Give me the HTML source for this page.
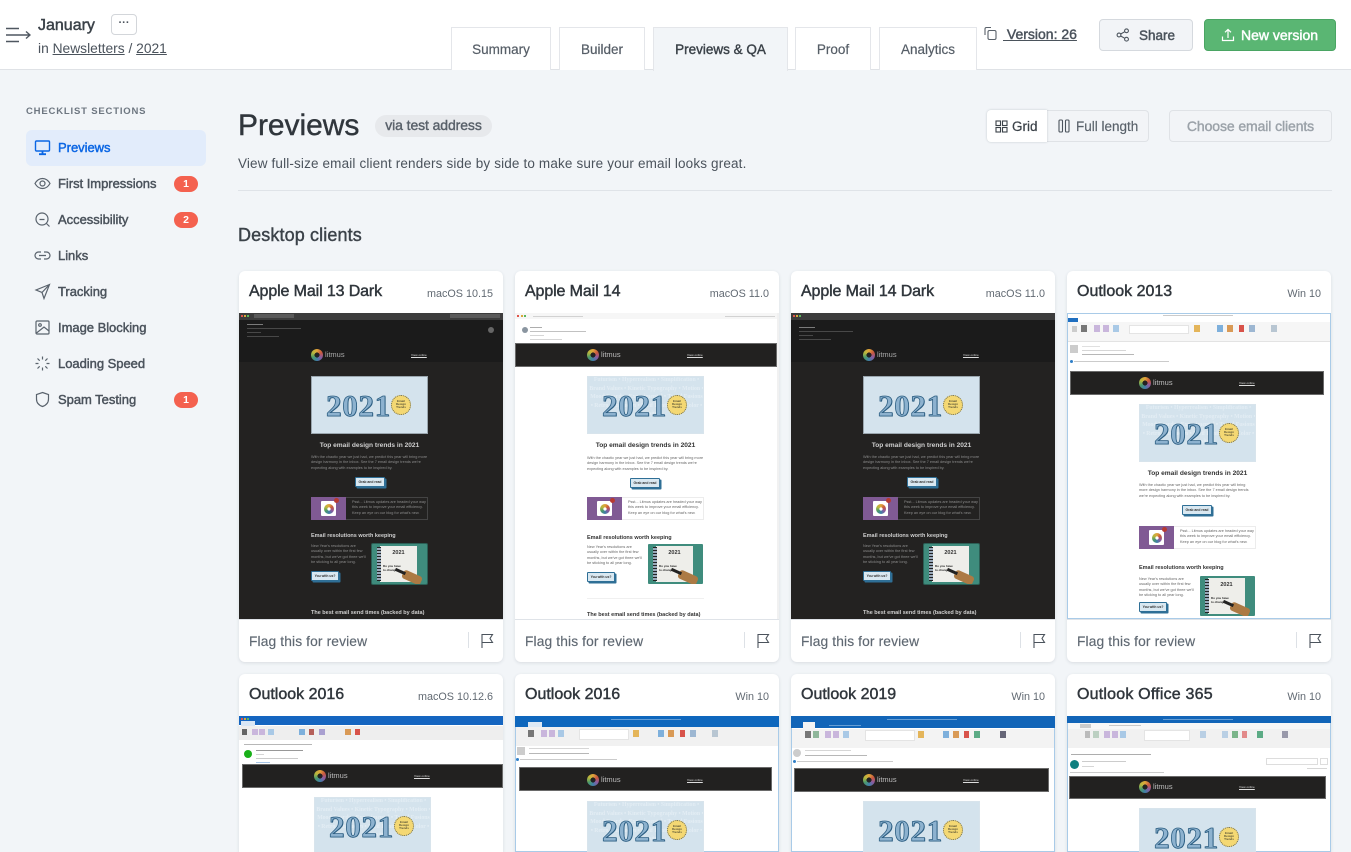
<!DOCTYPE html>
<html lang="en"><head><meta charset="utf-8"><title>Previews</title>
<style>
*{box-sizing:border-box}
html,body{margin:0;padding:0;width:1351px;height:852px;overflow:hidden}
#w{position:relative;width:1351px;height:852px;overflow:hidden;background:#f2f5f8;font-family:"Liberation Sans",sans-serif;color:#3b4249}
.a{position:absolute;white-space:nowrap}
.s{-webkit-text-stroke:.45px currentColor}
#hd{position:absolute;left:0;top:0;width:1351px;height:70px;background:#fff;border-bottom:1px solid #dfe2e6}
.tab{position:absolute;top:27px;height:43px;background:#fff;border:1px solid #e4e6ea;border-bottom:0;text-align:center;font-size:13.5px;line-height:44px;color:#565e67;-webkit-text-stroke:.2px #565e67}
.tab.on{background:#f2f5f8;color:#3b4249;-webkit-text-stroke:.4px #3b4249;height:44px;z-index:2}
.nav{position:absolute;left:58px;font-size:13px;line-height:16px;color:#4b535c;-webkit-text-stroke:.45px #4b535c;white-space:nowrap;letter-spacing:-.03px}
.ic{position:absolute;left:34px;width:17px;height:17px;fill:none;stroke:#5a636d;stroke-width:1.2}
.bd{position:absolute;left:174px;width:24px;height:16px;border-radius:8px;background:#f4614f;color:#fff;font-size:10.5px;font-weight:bold;text-align:center;line-height:16px}
.card{position:absolute;width:264px;height:391px;background:#fff;border-radius:6px;box-shadow:0 1px 3px rgba(60,70,85,.14);overflow:hidden}
.card.r2{height:178px;border-radius:6px 6px 0 0}
.r2 .th{height:136px;border-bottom:0}
.r2 .em{height:130px;overflow:hidden}
.r2 .br{position:absolute;font-size:7.5px;line-height:8px;color:#bdbdbd;white-space:nowrap;filter:blur(.25px)}
.r2 .he{height:56px}
.ti{position:absolute;left:10px;top:11px;font-size:16px;line-height:20px;color:#30363c;-webkit-text-stroke:.45px #30363c;white-space:nowrap}
.pl{position:absolute;right:10px;top:15px;font-size:10.8px;line-height:16px;color:#626a73;white-space:nowrap}
.th{position:absolute;left:0;top:42px;width:264px;height:307px;overflow:hidden;background:#fff;border-bottom:1px solid #dfe3e8}
.d{background:#232221}
.ol{box-shadow:inset 0 0 0 1px #a9cbe8}
.fl{position:absolute;left:10px;top:362px;font-size:13.8px;line-height:18px;color:#5f6872;white-space:nowrap;letter-spacing:.12px;-webkit-text-stroke:.15px #5f6872}
.dv{position:absolute;left:229px;top:361px;width:1px;height:16px;background:#dde1e6}
.flg{position:absolute;left:241px;top:362px;width:14px;height:16px;fill:none;stroke:#4b535c;stroke-width:1.1}
/* email */
.em{position:absolute;width:117px;height:240px;filter:blur(.25px);color:#4a4a4a}
.em>*{position:absolute;display:block;white-space:nowrap}
.lg{left:0;top:-27.5px;width:12px;height:12px;border-radius:50%;background:radial-gradient(circle,#222 0 2.4px,transparent 2.6px),conic-gradient(#e0a43a,#c9573f,#8a5aa0,#3f7fa8,#4c9a6a,#b7b83e,#e0a43a)}
.lt{left:14px;top:-25.5px;font-size:7.5px;line-height:8px;color:#bdbdbd}
.vo{left:100px;top:-23.5px;font-size:3.1px;line-height:4px;color:#ddd;text-decoration:underline}
.he{left:0;top:0;width:117px;height:58px;background:#d4e3ed;overflow:hidden;border:1px solid #d8e4ec}
.em.k .he{border-color:#9aa6ae}
.wm{position:absolute;left:1px;width:115px;text-align:center;font:bold 5.8px/8.6px "Liberation Serif",serif;color:#e3edf4;white-space:normal}
.yr{position:absolute;left:14px;top:12px;font:bold 31px/34px "Liberation Serif",serif;letter-spacing:.7px;color:#8db2cf;-webkit-text-stroke:.8px #2d5f83;text-shadow:.6px .6px 0 #2d5f83}
.se{position:absolute;left:79px;top:18px;width:20px;height:20px;border-radius:50%;background:#f4d873;border:1.5px dotted #6a6a55;font:bold 3px/3.4px "Liberation Sans",sans-serif;color:#5a5437;text-align:center;padding-top:3.5px;white-space:normal}
.h1{left:0;width:117px;top:66px;text-align:center;font:bold 6.6px/8px "Liberation Sans",sans-serif;color:#333}
.p{font-size:3.8px;line-height:5.3px;color:#666;white-space:normal!important}
.bt{background:#d9e8f1;border:1px solid #2f6f96;box-shadow:1.5px 1.5px 0 #2f6f96;border-radius:1px;font:bold 3.4px/8px "Liberation Sans",sans-serif;color:#333;text-align:center}
.pu{left:0;top:121px;width:35px;height:23px;background:#805a94}
.ap{left:10px;top:125px;width:15px;height:15px;background:#fff;border-radius:1px}
.ap2{left:12.5px;top:127.5px;width:10px;height:10px;border-radius:50%;background:radial-gradient(circle,#fff 0 1.6px,transparent 1.8px),conic-gradient(#e0a43a,#c9573f,#8a5aa0,#3f7fa8,#4c9a6a,#b7b83e,#e0a43a)}
.rb{left:23px;top:122px;width:5px;height:5px;border-radius:50%;background:#b73a32}
.bx{left:35px;top:121px;width:82px;height:23px;border:1px solid #ececec;border-left:0}
.h2{left:0;top:156px;font:bold 5.5px/8px "Liberation Sans",sans-serif;color:#333}
.nb{left:61px;top:168px;width:55px;height:40px;background:#3f8c7d;border-radius:1px;overflow:hidden}
.pp{position:absolute;left:8px;top:2px;width:37px;height:36px;background:#eeeeea}
.pp:before{content:"";position:absolute;left:-3px;top:1px;width:4px;height:34px;background:repeating-linear-gradient(#222 0 1px,#9ab 1px 3px)}
.pp b{position:absolute;left:0;top:4px;width:37px;text-align:center;font:bold 5.5px/7px "Liberation Sans",sans-serif;color:#333}
.pp i{position:absolute;left:3px;top:18px;font:bold 3px/4px "Liberation Sans",sans-serif;color:#222;white-space:normal;width:20px}
.ha{position:absolute;left:30px;top:29px;width:20px;height:9px;background:#ac7a44;transform:rotate(24deg);border-radius:3px}
.pn{position:absolute;left:23px;top:26px;width:11px;height:2.5px;background:#222;transform:rotate(24deg)}
.hr{left:0;top:222px;width:117px;height:1px;background:#f0f0f0}
.h3{left:0;top:234px;font:bold 5.5px/6px "Liberation Sans",sans-serif;color:#333}
.k .lt{color:#aaa}.k .h1,.k .h2,.k .h3{color:#cfcfcf}.k .p{color:#8d8d8d}
.k .bx{border-color:#444}.k .hr{display:none}.k .wm{display:none}.k .nb{box-shadow:0 0 0 1px #2b5f55}
.bar{position:absolute;background:#222120;border:1px solid #6a6a6a}
.c{position:absolute;display:block}
.l{position:absolute;display:block;height:1px;background:#9aa0a6;opacity:.6;filter:blur(.3px)}
.r2 .lo{position:absolute;width:12px;height:12px;border-radius:50%;background:radial-gradient(circle,#222 0 2.4px,transparent 2.6px),conic-gradient(#e0a43a,#c9573f,#8a5aa0,#3f7fa8,#4c9a6a,#b7b83e,#e0a43a)}
.r2 .vw{position:absolute;font-size:3.1px;line-height:4px;color:#ddd;text-decoration:underline;white-space:nowrap}
</style></head><body><div id="w">

<div id="hd"></div>
<svg class="a" style="left:5px;top:27px" width="26" height="16" fill="none" stroke="#4f5760" stroke-width="1.4"><path d="M1 1.5h13M1 8h24M1 14.500h13M21 4.500l4 3.500-4 3.500"/></svg>
<div class="a s" style="left:38px;top:17px;font-size:16px;line-height:18px;color:#3b4249">January</div>
<div class="a" style="left:111px;top:14px;width:26px;height:21px;border:1px solid #d3d6da;border-radius:4px;background:#fff;text-align:center;font:bold 11px/17px 'Liberation Sans',sans-serif;color:#4b535c">···</div>
<div class="a" style="left:38px;top:40px;font-size:13.800px;line-height:17px;color:#4b535c">in <span style="text-decoration:underline">Newsletters</span> / <span style="text-decoration:underline">2021</span></div>

<div class="tab" style="left:451px;width:100px">Summary</div>
<div class="tab" style="left:559px;width:86px">Builder</div>
<div class="tab on" style="left:653px;width:135px">Previews &amp; QA</div>
<div class="tab" style="left:795px;width:76px">Proof</div>
<div class="tab" style="left:879px;width:98px">Analytics</div>

<svg class="a" style="left:983px;top:26px" width="15" height="15" fill="none" stroke="#59616a" stroke-width="1.1"><path d="M2 9V3a1.500 1.500 0 0 1 1.500-1.500H8"/><rect x="5" y="4.500" width="8" height="9" rx="1.500"/></svg>
<div class="a s" style="left:1003px;top:26px;font-size:14px;line-height:17px;color:#4b535c;text-decoration:underline">&nbsp;Version: 26</div>
<div class="a" style="left:1099px;top:19px;width:94px;height:32px;background:#f2f4f7;border:1px solid #d5d9de;border-radius:4px"></div>
<svg class="a" style="left:1116px;top:28px" width="14" height="14" fill="none" stroke="#4b535c" stroke-width="1.100"><circle cx="3" cy="7" r="1.900"/><circle cx="10.500" cy="2.800" r="1.900"/><circle cx="10.500" cy="11.200" r="1.900"/><path d="M4.700 6 8.800 3.700M4.700 8l4.100 2.300"/></svg>
<div class="a s" style="left:1139px;top:27px;font-size:13.500px;line-height:17px;color:#4b535c">Share</div>
<div class="a" style="left:1204px;top:19px;width:132px;height:32px;background:#5ab673;border:1px solid #4aa563;border-radius:4px"></div>
<svg class="a" style="left:1221px;top:28px" width="14" height="14" fill="none" stroke="#fff" stroke-width="1.200"><path d="M1.500 8.500v4h11v-4M7 10V1.500M4 4.300 7 1.500l3 2.800"/></svg>
<div class="a" style="left:1241px;top:27px;font-size:14px;line-height:17px;color:#fff;-webkit-text-stroke:.45px #fff">New version</div>

<div class="a" style="left:26px;top:105px;font-size:9.500px;line-height:13px;font-weight:bold;letter-spacing:.82px;color:#6d7680">CHECKLIST SECTIONS</div>
<div class="a" style="left:26px;top:130px;width:180px;height:36px;background:#e2ecfb;border-radius:6px"></div>
<svg class="ic" style="top:139px;stroke:#0b66e4;stroke-width:1.400" viewBox="0 0 17 17"><rect x="1.500" y="2" width="14" height="10" rx="1"/><path d="M8.500 12v3M5 15.200h7" stroke-width="1.800"/></svg>
<div class="nav" style="top:140px;color:#0b66e4;-webkit-text-stroke-color:#0b66e4">Previews</div>
<svg class="ic" style="top:175px" viewBox="0 0 17 17"><path d="M1 8.500C3 5 5.700 3.500 8.500 3.500S14 5 16 8.500c-2 3.500-4.700 5-7.500 5S3 12 1 8.500z"/><circle cx="8.500" cy="8.500" r="2.500"/></svg>
<div class="nav" style="top:176px">First Impressions</div><div class="bd" style="top:176px">1</div>
<svg class="ic" style="top:211px" viewBox="0 0 17 17"><circle cx="8" cy="8" r="6"/><path d="M5.500 8.500h5M12.500 12.500l3 3"/></svg>
<div class="nav" style="top:212px">Accessibility</div><div class="bd" style="top:212px">2</div>
<svg class="ic" style="top:247px" viewBox="0 0 17 17"><path d="M7 5H4.500a3.500 3.500 0 0 0 0 7H7M10 5h2.500a3.500 3.500 0 0 1 0 7H10M5 8.500h7"/></svg>
<div class="nav" style="top:248px">Links</div>
<svg class="ic" style="top:283px" viewBox="0 0 17 17"><path d="M15.500 1.500 2 7l6 2.500 2 6zM8 9.500l7.500-8"/></svg>
<div class="nav" style="top:284px">Tracking</div>
<svg class="ic" style="top:319px" viewBox="0 0 17 17"><rect x="2" y="2" width="13" height="13" rx="1"/><circle cx="6" cy="6" r="1.300"/><path d="M2.500 14 10 8l5 4"/></svg>
<div class="nav" style="top:320px">Image Blocking</div>
<svg class="ic" style="top:355px" viewBox="0 0 17 17"><path d="M8.500 1.500v3M8.500 12.500v3M1.500 8.500h3M12.500 8.500h3M3.500 3.500l2.200 2.200M11.300 11.300l2.200 2.200M3.500 13.500l2.200-2.200M11.300 5.700l2.200-2.200"/></svg>
<div class="nav" style="top:356px">Loading Speed</div>
<svg class="ic" style="top:391px" viewBox="0 0 17 17"><path d="M8.500 1.500 14.500 3.500V8c0 4-2.500 6.300-6 7.500C5 14.300 2.500 12 2.500 8V3.500z"/></svg>
<div class="nav" style="top:392px">Spam Testing</div><div class="bd" style="top:392px">1</div>

<div class="a" style="left:238px;top:108px;font-size:30px;line-height:36px;color:#30363c;-webkit-text-stroke:.4px #30363c;letter-spacing:-.05px">Previews</div>
<div class="a" style="left:375px;top:115px;width:117px;height:22px;border-radius:11px;background:#e7e9ec;text-align:center;font-size:14px;line-height:21px;color:#59616a;-webkit-text-stroke:.4px #59616a;letter-spacing:-.1px">via test address</div>
<div class="a" style="left:238px;top:155px;font-size:13.500px;line-height:17px;color:#4b535c;letter-spacing:.15px">View full-size email client renders side by side to make sure your email looks great.</div>
<div class="a" style="left:238px;top:190px;width:1094px;height:1px;background:#dfe3e8"></div>
<div class="a" style="left:1047px;top:110px;width:102px;height:32px;background:#f2f4f7;border:1px solid #dfe2e6;border-left:0;border-radius:0 4px 4px 0"></div>
<div class="a" style="left:987px;top:110px;width:60px;height:32px;background:#fff;border-radius:4px 0 0 4px;box-shadow:0 0 2px rgba(60,70,85,.25)"></div>
<svg class="a" style="left:995px;top:120px" width="13" height="13" fill="none" stroke="#3b4249" stroke-width="1.100"><rect x="1" y="1" width="4.500" height="4.500"/><rect x="7.500" y="1" width="4.500" height="4.500"/><rect x="1" y="7.500" width="4.500" height="4.500"/><rect x="7.500" y="7.500" width="4.500" height="4.500"/></svg>
<div class="a" style="left:1012px;top:118px;font-size:13.500px;line-height:17px;color:#3b4249;-webkit-text-stroke:.2px #3b4249">Grid</div>
<svg class="a" style="left:1058px;top:119px" width="12" height="14" fill="none" stroke="#4b535c" stroke-width="1.100"><rect x="1" y="1" width="3.500" height="12" rx="1"/><rect x="7.500" y="1" width="3.500" height="12" rx="1"/></svg>
<div class="a" style="left:1076px;top:118px;font-size:13.500px;line-height:17px;color:#59616a;-webkit-text-stroke:.15px #59616a">Full length</div>
<div class="a" style="left:1169px;top:110px;width:163px;height:32px;background:#f2f4f7;border:1px solid #dfe2e6;border-radius:4px;text-align:center;font-size:14px;line-height:31px;color:#9ba2a9;-webkit-text-stroke:.4px #9ba2a9;letter-spacing:-.1px">Choose email clients</div>
<div class="a" style="left:238px;top:225px;font-size:18px;line-height:21px;color:#3b4249;-webkit-text-stroke:.4px #3b4249;letter-spacing:.12px">Desktop clients</div>

<!-- ROW 1 -->
<div class="card" style="left:239px;top:271px">
<div class="ti" style="letter-spacing:-.12px">Apple Mail 13 Dark</div><div class="pl">macOS 10.15</div>
<div class="th d">
 <span class="c" style="left:0;top:0;width:264px;height:7px;background:#3c3c3c"></span>
 <span class="c" style="left:2px;top:2px;width:2px;height:2px;background:#e0564c"></span><span class="c" style="left:5px;top:2px;width:2px;height:2px;background:#d9a83c"></span><span class="c" style="left:8px;top:2px;width:2px;height:2px;background:#5cb85c"></span>
 <span class="c" style="left:15px;top:1px;width:40px;height:4px;background:#5a5a5a"></span><span class="c" style="left:211px;top:1px;width:50px;height:4px;background:#5a5a5a"></span>
 <span class="c" style="left:0;top:7px;width:264px;height:42px;background:#1b1b1b"></span>
 <span class="l" style="left:8px;top:11px;width:16px;background:#bbb"></span><span class="l" style="left:8px;top:15px;width:54px;background:#666"></span><span class="l" style="left:8px;top:19px;width:14px;background:#666"></span><span class="l" style="left:8px;top:23px;width:32px;background:#666"></span>
 <span class="c" style="left:249px;top:14px;width:6px;height:6px;border-radius:50%;background:#666"></span>
 <div class="em k" style="left:72px;top:63px">
  <i class="lg"></i><b class="lt" style="font-weight:normal">litmus</b><u class="vo">View online</u>
  <div class="he"><div class="yr">2021</div><div class="se">Email Design Trends</div></div>
  <b class="h1">Top email design trends in 2021</b>
  <div class="p" style="left:0;top:79px;width:117px">With the chaotic year we just had, we predict this year will bring more design harmony in the inbox. See the 7 email design trends we're expecting along with examples to be inspired by.</div>
  <div class="bt" style="left:44px;top:101px;width:30px;height:10px">Grab and read</div>
  <i class="pu"></i><i class="bx"></i><i class="ap"></i><i class="ap2"></i><i class="rb"></i>
  <div class="p" style="left:41px;top:124px;width:74px">Psst... Litmus updates are headed your way this week to improve your email efficiency. Keep an eye on our blog for what's new.</div>
  <b class="h2">Email resolutions worth keeping</b>
  <div class="p" style="left:0;top:168px;width:56px">New Year's resolutions are usually over within the first few months, but we've got three we'll be sticking to all year long.</div>
  <div class="bt" style="left:0;top:195px;width:28px;height:10px">You with us?</div>
  <div class="nb"><div class="pp"><b>2021</b><i>Do you have to change</i></div><i class="ha"></i><i class="pn"></i></div>
  <b class="h3">The best email send times (backed by data)</b>
 </div>
</div>
<div class="fl">Flag this for review</div><div class="dv"></div>
<svg class="flg" viewBox="0 0 14 16"><path d="M2 15V1.500h10.500L10 5.500l2.500 4H2"/></svg>
</div>

<div class="card" style="left:515px;top:271px">
<div class="ti" style="letter-spacing:-.12px">Apple Mail 14</div><div class="pl">macOS 11.0</div>
<div class="th">
 <span class="c" style="left:0;top:0;width:264px;height:6px;background:#f6f6f6"></span>
 <span class="c" style="left:2px;top:2px;width:2px;height:2px;background:#e0564c"></span><span class="c" style="left:6px;top:2px;width:2px;height:2px;background:#d9a83c"></span><span class="c" style="left:9px;top:2px;width:2px;height:2px;background:#5cb85c"></span>
 <span class="l" style="left:18px;top:3px;width:50px;background:#bbb"></span><span class="l" style="left:210px;top:3px;width:50px;background:#bbb"></span>
 <span class="c" style="left:7px;top:14px;width:6px;height:6px;border-radius:50%;background:#8a95a0"></span>
 <span class="l" style="left:15px;top:14px;width:12px;background:#777"></span><span class="l" style="left:15px;top:18px;width:56px;background:#999"></span><span class="l" style="left:15px;top:22px;width:14px;background:#bbb"></span><span class="l" style="left:15px;top:26px;width:32px;background:#bbb"></span>
 <div class="bar" style="left:0;top:30px;width:262px;height:24px"></div>
 <span class="c" style="left:262px;top:0;width:2px;height:306px;background:#f1f1f1"></span>
 <div class="em" style="left:72px;top:63px">
  <i class="lg"></i><b class="lt" style="font-weight:normal">litmus</b><u class="vo">View online</u>
  <div class="he"><div class="wm" style="top:-1px">Futurism • Hyperrealism • Simplification • Brand Values • Kinetic Typography • Motion • Mood Boards • Experimental • Trend Fusions • Retro • Inclusion • Serif Fonts • Flat Color • Diversity</div><div class="yr">2021</div><div class="se">Email Design Trends</div></div>
  <b class="h1">Top email design trends in 2021</b>
  <div class="p" style="left:0;top:80px;width:117px">With the chaotic year we just had, we predict this year will bring more design harmony in the inbox. See the 7 email design trends we're expecting along with examples to be inspired by.</div>
  <div class="bt" style="left:43px;top:102px;width:30px;height:10px">Grab and read</div>
  <i class="pu"></i><i class="bx"></i><i class="ap"></i><i class="ap2"></i><i class="rb"></i>
  <div class="p" style="left:41px;top:124px;width:74px">Psst... Litmus updates are headed your way this week to improve your email efficiency. Keep an eye on our blog for what's new.</div>
  <b class="h2" style="top:158px">Email resolutions worth keeping</b>
  <div class="p" style="left:0;top:169px;width:56px">New Year's resolutions are usually over within the first few months, but we've got three we'll be sticking to all year long.</div>
  <div class="bt" style="left:0;top:196px;width:28px;height:10px">You with us?</div>
  <div class="nb"><div class="pp"><b>2021</b><i>Do you have to change</i></div><i class="ha"></i><i class="pn"></i></div>
  <i class="hr"></i>
  <b class="h3" style="top:236px">The best email send times (backed by data)</b>
 </div>
</div>
<div class="fl">Flag this for review</div><div class="dv"></div>
<svg class="flg" viewBox="0 0 14 16"><path d="M2 15V1.500h10.500L10 5.500l2.500 4H2"/></svg>
</div>

<div class="card" style="left:791px;top:271px">
<div class="ti" style="letter-spacing:-.12px">Apple Mail 14 Dark</div><div class="pl">macOS 11.0</div>
<div class="th d">
 <span class="c" style="left:0;top:0;width:264px;height:7px;background:#3c3c3c"></span>
 <span class="c" style="left:2px;top:2px;width:2px;height:2px;background:#e0564c"></span><span class="c" style="left:5px;top:2px;width:2px;height:2px;background:#d9a83c"></span><span class="c" style="left:8px;top:2px;width:2px;height:2px;background:#5cb85c"></span>
 <span class="c" style="left:0;top:7px;width:264px;height:42px;background:#1b1b1b"></span>
 <span class="l" style="left:8px;top:14px;width:16px;background:#bbb"></span><span class="l" style="left:8px;top:18px;width:54px;background:#666"></span><span class="l" style="left:8px;top:22px;width:14px;background:#666"></span><span class="l" style="left:8px;top:26px;width:32px;background:#666"></span>
 <div class="em k" style="left:72px;top:63px">
  <i class="lg"></i><b class="lt" style="font-weight:normal">litmus</b><u class="vo">View online</u>
  <div class="he"><div class="yr">2021</div><div class="se">Email Design Trends</div></div>
  <b class="h1">Top email design trends in 2021</b>
  <div class="p" style="left:0;top:79px;width:117px">With the chaotic year we just had, we predict this year will bring more design harmony in the inbox. See the 7 email design trends we're expecting along with examples to be inspired by.</div>
  <div class="bt" style="left:44px;top:101px;width:30px;height:10px">Grab and read</div>
  <i class="pu"></i><i class="bx"></i><i class="ap"></i><i class="ap2"></i><i class="rb"></i>
  <div class="p" style="left:41px;top:124px;width:74px">Psst... Litmus updates are headed your way this week to improve your email efficiency. Keep an eye on our blog for what's new.</div>
  <b class="h2">Email resolutions worth keeping</b>
  <div class="p" style="left:0;top:168px;width:56px">New Year's resolutions are usually over within the first few months, but we've got three we'll be sticking to all year long.</div>
  <div class="bt" style="left:0;top:195px;width:28px;height:10px">You with us?</div>
  <div class="nb"><div class="pp"><b>2021</b><i>Do you have to change</i></div><i class="ha"></i><i class="pn"></i></div>
  <b class="h3">The best email send times (backed by data)</b>
 </div>
</div>
<div class="fl">Flag this for review</div><div class="dv"></div>
<svg class="flg" viewBox="0 0 14 16"><path d="M2 15V1.500h10.500L10 5.500l2.500 4H2"/></svg>
</div>

<div class="card" style="left:1067px;top:271px">
<div class="ti">Outlook 2013</div><div class="pl">Win 10</div>
<div class="th ol">
 <span class="l" style="left:96px;top:2px;width:70px;background:#aaa"></span>
 <span class="c" style="left:1px;top:5px;width:10px;height:4px;background:#1f6fc0"></span>
 <span class="c" style="left:1px;top:9px;width:262px;height:20px;background:#f6f6f6;border-bottom:1px solid #e3e3e3"></span>
 <span class="c" style="left:5px;top:13px;width:5px;height:6px;background:#ccc"></span><span class="c" style="left:14px;top:12px;width:6px;height:7px;background:#777"></span><span class="c" style="left:27px;top:12px;width:6px;height:7px;background:#c9b6dc"></span><span class="c" style="left:36px;top:12px;width:6px;height:7px;background:#c9b6dc"></span><span class="c" style="left:46px;top:12px;width:6px;height:7px;background:#a9c9e6"></span><span class="c" style="left:62px;top:12px;width:60px;height:9px;background:#fff;border:1px solid #e4e4e4"></span><span class="c" style="left:127px;top:12px;width:6px;height:7px;background:#e4b55a"></span><span class="c" style="left:150px;top:12px;width:6px;height:7px;background:#7eb0dc"></span><span class="c" style="left:160px;top:12px;width:6px;height:7px;background:#d99a56"></span><span class="c" style="left:172px;top:12px;width:5px;height:7px;background:#d8534a"></span><span class="c" style="left:182px;top:12px;width:6px;height:7px;background:#9db7d2"></span><span class="c" style="left:204px;top:12px;width:6px;height:7px;background:#b8c6d2"></span>
 <span class="c" style="left:3px;top:32px;width:8px;height:8px;background:#ccc"></span>
 <span class="l" style="left:15px;top:33px;width:18px;background:#ccc"></span><span class="l" style="left:15px;top:37px;width:44px;background:#bbb"></span><span class="l" style="left:15px;top:41px;width:52px;background:#888"></span>
 <span class="c" style="left:3px;top:47px;width:3px;height:3px;border-radius:50%;background:#2f7fc7"></span><span class="l" style="left:7px;top:48px;width:95px;background:#aaa"></span>
 <div class="bar" style="left:3px;top:58px;width:254px;height:24px"></div>
 <div class="em" style="left:72px;top:91px;height:214px">
  <i class="lg"></i><b class="lt" style="font-weight:normal">litmus</b><u class="vo">View online</u>
  <div class="he"><div class="wm" style="top:-1px">Futurism • Hyperrealism • Simplification • Brand Values • Kinetic Typography • Motion • Mood Boards • Experimental • Trend Fusions • Retro • Inclusion • Serif Fonts • Flat Color • Diversity</div><div class="yr">2021</div><div class="se">Email Design Trends</div></div>
  <b class="h1">Top email design trends in 2021</b>
  <div class="p" style="left:0;top:79px;width:113px">With the chaotic year we just had, we predict this year will bring more design harmony in the inbox. See the 7 email design trends we're expecting along with examples to be inspired by.</div>
  <div class="bt" style="left:43px;top:101px;width:30px;height:10px">Grab and read</div>
  <i class="pu" style="top:122px"></i><i class="bx" style="top:122px"></i><i class="ap" style="top:126px"></i><i class="ap2" style="top:128.500px"></i><i class="rb" style="top:123px"></i>
  <div class="p" style="left:41px;top:125px;width:74px">Psst... Litmus updates are headed your way this week to improve your email efficiency. Keep an eye on our blog for what's new.</div>
  <b class="h2" style="top:160px">Email resolutions worth keeping</b>
  <div class="p" style="left:0;top:173px;width:56px">New Year's resolutions are usually over within the first few months, but we've got three we'll be sticking to all year long.</div>
  <div class="bt" style="left:0;top:198px;width:28px;height:10px">You with us?</div>
  <div class="nb" style="top:172px"><div class="pp"><b>2021</b><i>Do you have to change</i></div><i class="ha"></i><i class="pn"></i></div>
 </div>
</div>
<div class="fl">Flag this for review</div><div class="dv"></div>
<svg class="flg" viewBox="0 0 14 16"><path d="M2 15V1.500h10.500L10 5.500l2.500 4H2"/></svg>
</div>

<!-- ROW 2 -->
<div class="card r2" style="left:239px;top:674px">
<div class="ti">Outlook 2016</div><div class="pl">macOS 10.12.6</div>
<div class="th">
 <span class="c" style="left:0;top:0;width:264px;height:9px;background:#1565c0"></span>
 <span class="c" style="left:2px;top:2px;width:2px;height:2px;background:#e0564c"></span><span class="c" style="left:5px;top:2px;width:2px;height:2px;background:#d9a83c"></span><span class="c" style="left:8px;top:2px;width:2px;height:2px;background:#5cb85c"></span>
 <span class="c" style="left:2px;top:5px;width:14px;height:5px;background:#d8e6f5"></span>
 <span class="c" style="left:0;top:10px;width:264px;height:14px;background:#eeeeee"></span>
 <span class="c" style="left:3px;top:13px;width:5px;height:6px;background:#666"></span><span class="c" style="left:13px;top:13px;width:6px;height:6px;background:#c9b6dc"></span><span class="c" style="left:20px;top:13px;width:6px;height:6px;background:#c9b6dc"></span><span class="c" style="left:29px;top:13px;width:6px;height:6px;background:#a9c9e6"></span><span class="c" style="left:60px;top:13px;width:6px;height:6px;background:#7eb0dc"></span><span class="c" style="left:70px;top:13px;width:5px;height:6px;background:#b5605a"></span><span class="c" style="left:80px;top:13px;width:6px;height:6px;background:#a9a0d0"></span><span class="c" style="left:106px;top:13px;width:6px;height:6px;background:#d99a56"></span><span class="c" style="left:116px;top:13px;width:5px;height:6px;background:#d8534a"></span>
 <span class="l" style="left:5px;top:28px;width:68px;background:#888"></span>
 <span class="c" style="left:5px;top:34px;width:8px;height:8px;border-radius:50%;background:#18b018"></span>
 <span class="l" style="left:17px;top:34px;width:47px;background:#555"></span><span class="l" style="left:17px;top:38px;width:8px;background:#bbb"></span><span class="l" style="left:17px;top:42px;width:42px;background:#aaa"></span><span class="l" style="left:17px;top:46px;width:14px;background:#6c9fd8"></span>
 <div class="bar" style="left:3px;top:48px;width:261px;height:24px"></div>
 <span class="lo" style="left:75px;top:53.500px"></span><span class="br" style="left:89px;top:55.500px">litmus</span><span class="vw" style="left:175px;top:57.500px">View online</span>
 <div class="em" style="left:75px;top:81px;height:55px">
  <div class="he"><div class="wm" style="top:-1px">Futurism • Hyperrealism • Simplification • Brand Values • Kinetic Typography • Motion • Mood Boards • Experimental • Trend Fusions • Retro • Inclusion • Serif Fonts • Flat Color • Diversity</div><div class="yr">2021</div><div class="se">Email Design Trends</div></div>
 </div>
</div>
</div>

<div class="card r2" style="left:515px;top:674px">
<div class="ti">Outlook 2016</div><div class="pl">Win 10</div>
<div class="th ol">
 <span class="c" style="left:0;top:0;width:264px;height:11px;background:#0e67bd"></span>
 <span class="c" style="left:13px;top:6px;width:14px;height:6px;background:#dde9f5"></span><span class="l" style="left:96px;top:3px;width:70px;background:#9ec4e8"></span>
 <span class="c" style="left:1px;top:11px;width:262px;height:19px;background:#f1f1f1"></span>
 <span class="c" style="left:13px;top:14px;width:6px;height:7px;background:#777"></span><span class="c" style="left:26px;top:14px;width:6px;height:7px;background:#c9b6dc"></span><span class="c" style="left:34px;top:14px;width:6px;height:7px;background:#c9b6dc"></span><span class="c" style="left:43px;top:14px;width:6px;height:7px;background:#a9c9e6"></span><span class="c" style="left:64px;top:13px;width:50px;height:11px;background:#fff;border:1px solid #e4e4e4"></span><span class="c" style="left:118px;top:14px;width:6px;height:7px;background:#e4b55a"></span><span class="c" style="left:143px;top:14px;width:6px;height:7px;background:#7eb0dc"></span><span class="c" style="left:153px;top:14px;width:6px;height:7px;background:#d99a56"></span><span class="c" style="left:165px;top:14px;width:5px;height:7px;background:#d8534a"></span><span class="c" style="left:175px;top:14px;width:6px;height:7px;background:#9db7d2"></span><span class="c" style="left:197px;top:14px;width:6px;height:7px;background:#b8c6d2"></span>
 <span class="c" style="left:2px;top:31px;width:8px;height:8px;background:#ccc"></span>
 <span class="l" style="left:14px;top:32px;width:60px;background:#bbb"></span><span class="l" style="left:14px;top:37px;width:60px;background:#888"></span>
 <span class="c" style="left:1px;top:42px;width:3px;height:3px;border-radius:50%;background:#2f7fc7"></span><span class="l" style="left:5px;top:43px;width:97px;background:#aaa"></span>
 <div class="bar" style="left:4px;top:51px;width:253px;height:24px"></div>
 <span class="lo" style="left:72px;top:57.500px"></span><span class="br" style="left:86px;top:59.500px">litmus</span><span class="vw" style="left:172px;top:61.500px">View online</span>
 <div class="em" style="left:72px;top:85px;height:51px">
  <div class="he"><div class="wm" style="top:-1px">Futurism • Hyperrealism • Simplification • Brand Values • Kinetic Typography • Motion • Mood Boards • Experimental • Trend Fusions • Retro • Inclusion • Serif Fonts • Flat Color • Diversity</div><div class="yr">2021</div><div class="se">Email Design Trends</div></div>
 </div>
</div>
</div>

<div class="card r2" style="left:791px;top:674px">
<div class="ti">Outlook 2019</div><div class="pl">Win 10</div>
<div class="th ol">
 <span class="c" style="left:0;top:0;width:264px;height:12px;background:#1265b8"></span>
 <span class="c" style="left:12px;top:6px;width:12px;height:7px;background:#f4f4f4"></span><span class="l" style="left:96px;top:3px;width:70px;background:#9ec4e8"></span><span class="l" style="left:38px;top:9px;width:32px;background:#9ec4e8"></span>
 <span class="c" style="left:1px;top:13px;width:262px;height:19px;background:#f3f3f3"></span>
 <span class="c" style="left:14px;top:15px;width:6px;height:7px;background:#777"></span><span class="c" style="left:22px;top:15px;width:6px;height:7px;background:#8fb79b"></span><span class="c" style="left:34px;top:15px;width:6px;height:7px;background:#c9b6dc"></span><span class="c" style="left:42px;top:15px;width:6px;height:7px;background:#c9b6dc"></span><span class="c" style="left:52px;top:15px;width:6px;height:7px;background:#a9c9e6"></span><span class="c" style="left:74px;top:14px;width:50px;height:11px;background:#fff;border:1px solid #e4e4e4"></span><span class="c" style="left:127px;top:15px;width:6px;height:7px;background:#e4b55a"></span><span class="c" style="left:152px;top:15px;width:6px;height:7px;background:#7eb0dc"></span><span class="c" style="left:162px;top:15px;width:6px;height:7px;background:#d99a56"></span><span class="c" style="left:173px;top:15px;width:5px;height:7px;background:#d8534a"></span><span class="c" style="left:183px;top:15px;width:6px;height:7px;background:#5cab85"></span><span class="c" style="left:209px;top:15px;width:6px;height:7px;background:#667"></span>
 <span class="c" style="left:2px;top:33px;width:8px;height:8px;border-radius:50%;background:#ccc"></span>
 <span class="l" style="left:14px;top:34px;width:46px;background:#bbb"></span><span class="l" style="left:14px;top:39px;width:62px;background:#888"></span>
 <span class="c" style="left:2px;top:44px;width:3px;height:3px;border-radius:50%;background:#2f7fc7"></span><span class="l" style="left:6px;top:45px;width:96px;background:#aaa"></span>
 <div class="bar" style="left:3px;top:52px;width:255px;height:24px"></div>
 <span class="lo" style="left:72px;top:57.500px"></span><span class="br" style="left:86px;top:59.500px">litmus</span><span class="vw" style="left:172px;top:61.500px">View online</span>
 <div class="em" style="left:72px;top:85px;height:51px">
  <div class="he"><div class="yr">2021</div><div class="se">Email Design Trends</div></div>
 </div>
</div>
</div>

<div class="card r2" style="left:1067px;top:674px">
<div class="ti" style="letter-spacing:.2px">Outlook Office 365</div><div class="pl">Win 10</div>
<div class="th ol">
 <span class="c" style="left:0;top:0;width:264px;height:7px;background:#1265b8"></span>
 <span class="l" style="left:96px;top:3px;width:70px;background:#9ec4e8"></span>
 <span class="c" style="left:1px;top:7px;width:262px;height:6px;background:#f7f7f7"></span><span class="c" style="left:13px;top:8px;width:11px;height:4px;background:#ccc"></span><span class="l" style="left:42px;top:9px;width:32px;background:#aaa"></span>
 <span class="c" style="left:1px;top:13px;width:262px;height:19px;background:#f1f1f1"></span>
 <span class="c" style="left:18px;top:15px;width:5px;height:7px;background:#bbb"></span><span class="c" style="left:26px;top:15px;width:6px;height:7px;background:#bcd0c2"></span><span class="c" style="left:37px;top:15px;width:6px;height:7px;background:#c9b6dc"></span><span class="c" style="left:45px;top:15px;width:6px;height:7px;background:#c9b6dc"></span><span class="c" style="left:53px;top:15px;width:6px;height:7px;background:#a9c9e6"></span><span class="c" style="left:77px;top:14px;width:46px;height:11px;background:#fff;border:1px solid #e4e4e4"></span><span class="c" style="left:133px;top:15px;width:6px;height:7px;background:#b9cfe4"></span><span class="c" style="left:155px;top:15px;width:6px;height:7px;background:#b9cfe4"></span><span class="c" style="left:165px;top:15px;width:6px;height:7px;background:#7bb58a"></span><span class="c" style="left:175px;top:15px;width:5px;height:7px;background:#e28a8a"></span><span class="c" style="left:190px;top:15px;width:6px;height:7px;background:#5cab85"></span><span class="c" style="left:215px;top:15px;width:6px;height:7px;background:#99a"></span>
 <span class="l" style="left:4px;top:38px;width:80px;background:#777"></span>
 <span class="c" style="left:3px;top:44px;width:9px;height:9px;border-radius:50%;background:#0f8080"></span>
 <span class="l" style="left:15px;top:45px;width:44px;background:#aaa"></span><span class="l" style="left:15px;top:50px;width:12px;background:#bbb"></span>
 <span class="c" style="left:199px;top:42px;width:52px;height:7px;background:#fff;border:1px solid #ddd"></span><span class="c" style="left:253px;top:42px;width:8px;height:7px;background:#fff;border:1px solid #ddd"></span>
 <span class="l" style="left:240px;top:52px;width:20px;background:#bbb"></span>
 <span class="l" style="left:3px;top:56px;width:94px;background:#aaa"></span>
 <div class="bar" style="left:2px;top:60px;width:257px;height:23px"></div>
 <span class="lo" style="left:72px;top:64.500px"></span><span class="br" style="left:86px;top:66.500px">litmus</span><span class="vw" style="left:172px;top:68.500px">View online</span>
 <div class="em" style="left:72px;top:92px;height:44px">
  <div class="he"><div class="yr">2021</div><div class="se">Email Design Trends</div></div>
 </div>
</div>
</div>

</div></body></html>
